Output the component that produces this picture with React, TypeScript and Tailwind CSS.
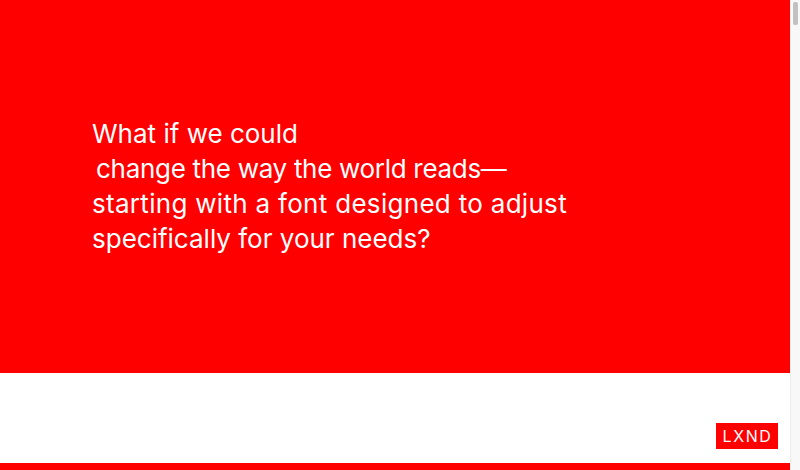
export default function App() {
  return (
    <div className="h-[470px] w-[800px] overflow-hidden flex bg-white font-['Inter',sans-serif]">
      <div className="w-[790px] flex flex-col">
        <div className="h-[373px] bg-[#ff0000] flex flex-col justify-center pl-[92px] pb-[2px] text-white text-[26px] leading-[35px] [font-variant-ligatures:none]">
          <p>What if we could</p>
          <p className="pl-[4px] tracking-[-0.3px]">change the way the world reads—</p>
          <p className="tracking-[0.3px]">starting with a font designed to adjust</p>
          <p>specifically for your needs?</p>
        </div>
        <div className="h-[90px] flex items-end justify-end pr-[12px] pb-[14px]">
          <div className="h-[26px] w-[62px] pl-[1px] bg-[#ff0000] text-white text-[16px] tracking-[1.6px] flex items-center justify-center">LXND</div>
        </div>
        <div className="h-[7px] bg-[#ff0000]" />
      </div>
      <div className="w-[10px] bg-[#f8f8f8] border-l border-[#ededed] pl-[2px] pt-[2px]">
        <div className="w-[5px] h-[23px] bg-[#c1c1c1] rounded-[2px]" />
      </div>
    </div>
  );
}
